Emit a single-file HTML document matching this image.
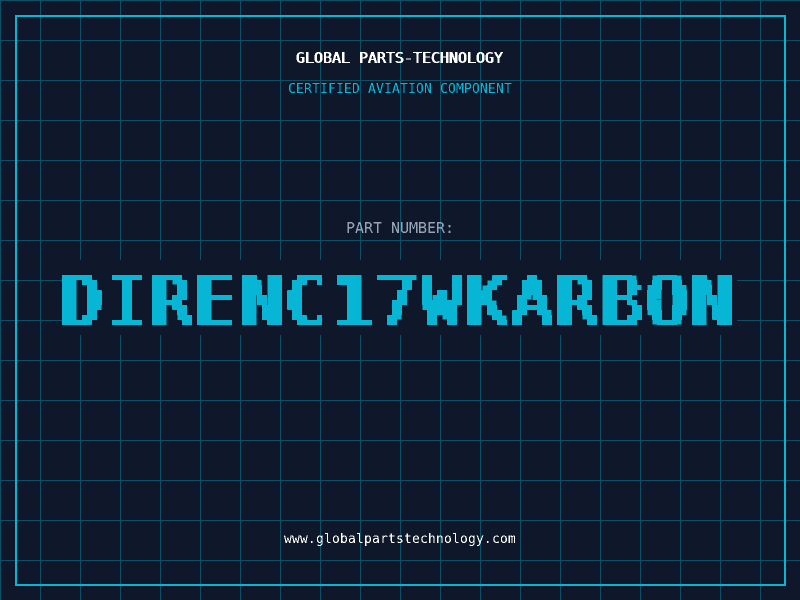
<!DOCTYPE html>
<html lang="en">
<head>
<meta charset="utf-8">
<title>Global Parts-Technology</title>
<style>
html,body{margin:0;padding:0;width:800px;height:600px;overflow:hidden;background:#0f172a}
#grid{position:absolute;left:0;top:0;width:800px;height:600px;background-color:#0f172a;
background-image:linear-gradient(to right,#0c4f66 1px,transparent 1px),linear-gradient(to bottom,#0c4f66 1px,transparent 1px);
background-size:40px 40px}
#frame{position:absolute;left:15px;top:15px;width:767px;height:567px;border:2px solid #06b6d4}
.t{position:absolute;left:0;width:800px;text-align:center;white-space:pre;filter:url(#hard)}
#a{left:-1px;top:50px;font:15px/17px "DejaVu Sans Mono",monospace;letter-spacing:-.03px;color:#fff;filter:url(#smear)}
#b{top:82px;font:13px/15px "DejaVu Sans Mono",monospace;letter-spacing:.17px;color:#06b6d4}
#c{top:220px;font:15px/17px "DejaVu Sans Mono",monospace;letter-spacing:-.03px;color:#94a3b8}
#d{top:532px;font:13px/15px "DejaVu Sans Mono",monospace;letter-spacing:.17px;color:#fff}
#box{position:absolute;left:62px;top:260px;width:675px;height:75px;background:#0f172a}
#big{position:absolute;left:62px;top:260px;width:675px;height:75px;overflow:hidden;filter:url(#pix)}
#big>span{position:absolute;left:-3px;top:5px;font:69px/75px "DejaVu Sans Mono",monospace;letter-spacing:3.46px;color:#06b6d4;white-space:pre}
#big i{font-style:normal}
#big i.e{position:relative;left:-2px}
#big i.w{display:inline-block;transform:scaleX(.97)}
</style>
</head>
<body>
<svg width="0" height="0" style="position:absolute">
<filter id="hard" color-interpolation-filters="sRGB" x="0" y="0" width="100%" height="100%">
<feComponentTransfer><feFuncA type="discrete" tableValues="0 1"/></feComponentTransfer>
</filter>
<filter id="smear" color-interpolation-filters="sRGB" x="0" y="0" width="100%" height="100%">
<feComponentTransfer result="h"><feFuncA type="discrete" tableValues="0 0 1"/></feComponentTransfer>
<feOffset dx="1" dy="0" in="h" result="o"/>
<feMerge><feMergeNode in="h"/><feMergeNode in="o"/></feMerge>
</filter>
<filter id="pix" color-interpolation-filters="sRGB" primitiveUnits="userSpaceOnUse" filterUnits="userSpaceOnUse" x="0" y="0" width="675" height="75">
<feOffset in="SourceGraphic" dx="2" dy="0" result="s1"/>
<feOffset in="SourceGraphic" dx="4" dy="0" result="s2"/>
<feMerge result="src"><feMergeNode in="SourceGraphic"/><feMergeNode in="s1"/><feMergeNode in="s2"/></feMerge>
<feFlood x="2" y="2" width="1" height="1" flood-color="#000"/>
<feComposite width="5" height="5"/>
<feTile result="dots"/>
<feComposite in="src" in2="dots" operator="in"/>
<feMorphology operator="dilate" radius="2"/>
<feComponentTransfer><feFuncA type="discrete" tableValues="0 1"/></feComponentTransfer>
</filter>
</svg>
<div id="grid"></div>
<div id="frame"></div>
<div class="t" id="a">GLOBAL PARTS-TECHNOLOGY</div>
<div class="t" id="b">CERTIFIED AVIATION COMPONENT</div>
<div class="t" id="c">PART NUMBER:</div>
<div id="box"></div>
<div id="big"><span>DIR<i class="e">E</i>NC17<i class="w">W</i>KARBON</span></div>
<div class="t" id="d">www.globalpartstechnology.com</div>
</body>
</html>
